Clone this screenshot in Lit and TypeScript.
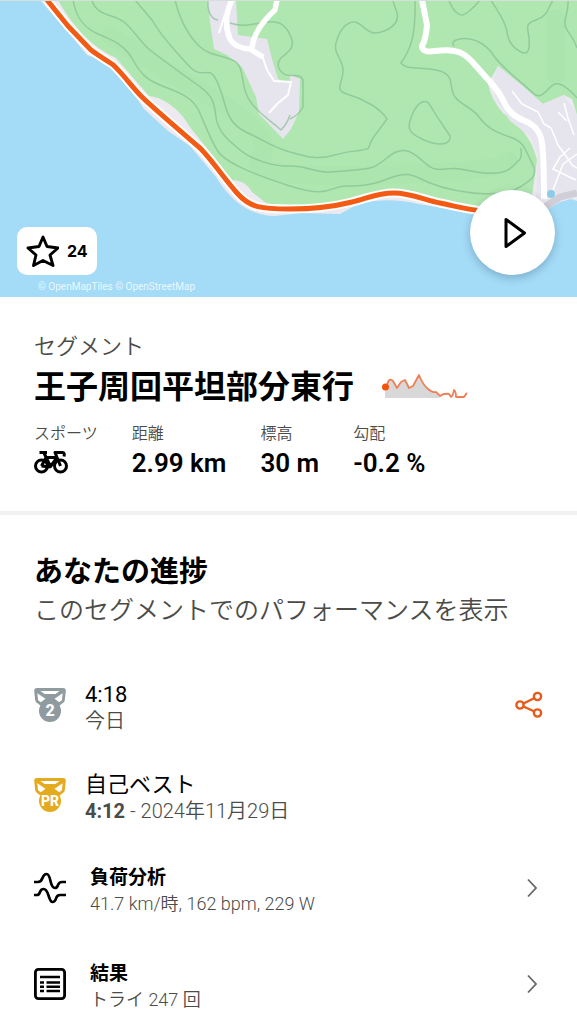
import { LitElement, html, css, svg } from "lit";
import { customElement } from "lit/decorators.js";

const CONTOURS = [
  "M73 0C76 18 84 28 98 34S124 44 133 60S148 80 160 85S192 95 199 111S210 138 217 150S250 173 290 186S330 186 345 186S370 186 390 178S415 177 430 183S465 193 487 194",
  "M92 0C96 16 114 14 124 22S140 42 150 50S185 76 199 86S214 102 216 117S228 140 240 150S275 167 290 166S315 173 330 172S360 170 370 168S387 156 396 152S412 151 425 163S445 166 460 169S500 178 512 167S521 158 521 148",
  "M135 0L152 20C162 38 175 50 188 65S208 67 214 76S222 95 226 108S236 128 250 134S272 147 290 152S317 160 335 155S352 152 362 150S366 150 373 138L387 119C380 107 360 98 347 94S342 85 343 72S333 55 336 43S346 22 354 22S366 34 376 33S400 25 397 13L393 1",
  "M175 0C180 20 188 35 199 46S227 55 236 62S240 90 252 104S270 120 281 130Q287 124 290 115",
  "M230 23C244 28 256 23 268 22S286 25 291 37S286 53 281 58S278 70 284 74S300 72 303 80V107Q299 115 290 119",
  "M208 0Q207 18 218 20",
  "M415 0C416 38 410 50 401 63C407 71 424 66 440 71S448 88 455 97S472 107 479 117S495 132 510 137S525 150 532 163S531 180 520 187S498 193 487 194",
  "M422 102C414 106 407 124 410 130S430 144 440 144S451 138 450 136S437 117 433 110S427 100 422 102Z",
  "M449 0C453 12 459 15 462 15S474 8 480 0",
  "M491 0C498 12 506 22 507 32S513 48 521 52S530 48 529 38S524 24 536 20S548 8 553 0",
  "M454 46C449 39 463 38 470 39S487 45 494 56S524 84 533 93S548 86 555 84S570 90 577 98",
  "M568 0C569 14 562 20 566 28S574 38 577 48",
];

const ROUTE =
  "M47 0L68 26L90 49Q93 52 112 64C118 68 133 88 142 97S178 129 200 148C211 159 224 178 237 193S262 209 290 209S336 206 352 202S378 193 394 193S425 200 440 203S468 210 485 211";

const trackMap = svg`
  <svg class="map-art" viewBox="0 0 577 297" preserveAspectRatio="xMidYMid slice" aria-hidden="true">
    <rect width="577" height="297" fill="#a4dbf6" />
    <path fill="#ece9f0" d="M40 0L68 32L87 55L98 59L114 70L130 88L144 109L168 131L190 146L216 177Q240 216 275 216L300 213L340 214L360 203Q390 197 418 204L450 209L485 213L548 209L560 202L571 199L577 201V0Z" />
    <path fill="#b0e7b0" d="M58 0C70 22 89 46 116 58L149 96C166 97 184 115 189 126L214 157L232 180Q245 180 252 192L266 203L285 206Q326 205 350 198T394 190T440 199L490 208L532 196L537 160C532 138 520 126 503 113Q491 99 488 84L498 66L520 84L543 104L564 95L572 99L577 115V0Z" />
    <g fill="none" stroke="#a5e3a9" stroke-width="18" stroke-linecap="round" opacity=".38">
      <path d="M110 36Q150 61 214 99T260 158T377 175T508 160" />
      <path d="M556 18V75" />
    </g>
    <path fill="#e6e4ed" d="M207 0H236L238 35L267 39L272 59L278 79L290 83V75L300 79L299 112L291 129L283 139L259 114L256 97L242 67L227 55L214 49Z" />
    <path fill="#e6e4ed" d="M498 66L520 84L543 104L564 95L577 115V189L536 200L538 155L531 137L510 121L495 98L494 78Z" />
    <g fill="none" stroke="#83bd91" stroke-width="1.5" opacity=".65">
      ${CONTOURS.map((d) => svg`<path d=${d} />`)}
    </g>
    <g fill="none" stroke="#fff" stroke-linejoin="round">
      <path stroke-width="5.5" d="M232 0Q222 20 230 39Q235 48 250 49L263 57M277 0L275 10Q254 29 252 48" />
      <path stroke-width="2" d="M262 55L267 70L274 81L291 82L288 95L278 103L269 113M225 14L219 33" />
      <path stroke-width="6" d="M422 0L427 25Q426 39 422 46Q422 53 435 51C458 48 465 53 476 66L492 84Q500 93 505 104T525 121T542 143T544 199" />
      <path stroke-width="1.5" d="M512 91L522 104L538 112L544 124L551 128L558 145L566 156L572 165L577 168M564 103L568 118L574 135M577 154L563 164L553 190M570 148L560 157L553 169L576 180M558 112L567 121" />
    </g>
    <path fill="none" stroke="#d0ced6" stroke-width="7" d="M540 210L560 197L577 193" />
    <circle cx="551" cy="194" r="4" fill="#8dcce8" />
    <path d=${ROUTE} fill="none" stroke="#fff" stroke-width="9" stroke-linejoin="round" />
    <path d=${ROUTE} fill="none" stroke="#f35b14" stroke-width="5" stroke-linejoin="round" />
    <path d="M0 .5H577" stroke="#d5dfdc" />
  </svg>`;

const medal = (place: string, kind: string, size: number) => html`
  <svg class="icon ${kind}" viewBox="0 0 32 36" aria-hidden="true">
    <path fill="currentColor" d="M3 1H29Q32 1 31.800 4L30.800 13Q30.500 14.500 29.500 15.500L25 19H7L2.500 15.500Q1.500 14.500 1.200 13L.2 4Q0 1 3 1Z" />
    <circle cx="16" cy="24" r="11" fill="currentColor" />
    <g fill="#fff">
      <path d="M6.500 4H25.500L21.500 7H10.500Z" />
      <path d="M3.300 6.200L11.500 11.700L6.800 15.200L4.100 13.200Z" />
      <path d="M28.700 6.200L20.500 11.700L25.200 15.200L27.900 13.200Z" />
      <text x="16" y="29" text-anchor="middle" font-size=${size} font-weight="800">${place}</text>
    </g>
  </svg>`;

const chevron = html`
  <svg class="chevron" viewBox="0 0 12 20" aria-hidden="true">
    <path d="M2 1.500L10 10L2 18.500" fill="none" stroke="#666562" stroke-width="1.800" />
  </svg>`;

@customElement("app-root")
export class AppRoot extends LitElement {
  static styles = css`
    :host {
      display: block;
      min-height: 100vh;
      background: #fff;
      color: #000;
      font-family: Roboto, "Noto Sans CJK JP", sans-serif;
    }
    * { box-sizing: border-box; }
    h1, h2, p, dl, dt, dd, ul { margin: 0; padding: 0; }
    button { font: inherit; color: inherit; border: 0; padding: 0; cursor: pointer; }
    svg { display: block; flex: none; }
    .map { position: relative; height: 297px; overflow: hidden; }
    .map-art { width: 100%; height: 100%; }
    .star {
      position: absolute; left: 17px; bottom: 22px;
      display: flex; align-items: center; gap: 8px;
      height: 48px; padding: 0 9px; border-radius: 10px;
      background: #fff;
      font: 700 16px/24px Inter, sans-serif;
    }
    .star svg { width: 33px; height: 33px; }
    .play {
      position: absolute; right: 22px; bottom: 22px;
      display: grid; place-items: center;
      width: 85px; height: 85px; border-radius: 50%;
      background: #fff;
      box-shadow: 0 3px 8px rgb(0 40 70 / 25%);
    }
    .play svg { width: 24px; height: 32px; margin-left: 4px; }
    .credit {
      position: absolute; left: 38px; bottom: 2px;
      color: #e9f8ff; font: 400 10px/16px Roboto, sans-serif;
    }
    .segment { padding: 34px 34px 31px; border-bottom: 4px solid #f1f1f3; }
    .kicker { color: #4b4b48; font-size: 22px; font-weight: 350; line-height: 32px; }
    .title-line { display: flex; align-items: center; gap: 28px; }
    h1 { font-size: 32px; line-height: 48px; font-weight: 700; }
    .profile { width: 86px; height: 26px; }
    .stats { display: flex; gap: 34px; margin-top: 11px; }
    dt { color: #4b4b48; font-size: 16px; font-weight: 350; line-height: 24px; }
    dd { font-size: 26px; font-weight: 600; line-height: 34px; white-space: nowrap; }
    .bike { width: 34px; height: 24px; margin-top: 4px; }
    .progress { padding: 37px 34px 0; }
    h2 { font-size: 29px; line-height: 40px; font-weight: 700; }
    .lead { color: #4b4b48; font-size: 25px; font-weight: 350; line-height: 38px; }
    .efforts { list-style: none; margin-top: 30px; }
    .effort { display: flex; align-items: center; gap: 19px; height: 90px; width: 100%; }
    .link { gap: 24px; height: 96px; color: inherit; text-decoration: none; }
    .icon { width: 32px; height: 36px; }
    .silver { color: #8f9b9f; }
    .gold { color: #e5ab20; }
    .text { flex: 1; min-width: 0; padding-top: 6px; }
    .main { font-size: 22px; font-weight: 400; line-height: 26px; }
    .sub { color: #4b4b48; font-size: 20px; font-weight: 350; line-height: 26px; }
    .sub b { font-weight: 700; }
    .link .main { font-size: 19px; font-weight: 700; }
    .link .sub { font-size: 18px; }
    .share { background: none; }
    .share svg { width: 28px; height: 28px; }
    .chevron { width: 12px; height: 20px; margin-right: 5px; }
  `;

  render() {
    return html`
      <header class="map">
        ${trackMap}
        <button class="star" aria-label="24">
          <svg viewBox="0 0 33 33" aria-hidden="true">
            <path d="M17 2L21 11.500L32 13L24 20L27 30.500L17 25.500L7.500 30.500L10 20L2 13L13 11.500Z" fill="none" stroke="#000" stroke-width="2.900" stroke-linejoin="round" />
          </svg>
          <span>24</span>
        </button>
        <button class="play" aria-label="再生">
          <svg viewBox="0 0 24 32" aria-hidden="true">
            <path d="M3 2.500V29.500L21.500 16Z" fill="none" stroke="#000" stroke-width="3" stroke-linejoin="round" />
          </svg>
        </button>
        <p class="credit">© OpenMapTiles © OpenStreetMap</p>
      </header>

      <section class="segment">
        <p class="kicker">セグメント</p>
        <div class="title-line">
          <h1>王子周回平坦部分東行</h1>
          <svg class="profile" viewBox="0 0 86 26" aria-hidden="true">
            <path fill="#d8d8d8" d="M3 13L7 6L11 6L15 13L23 6L28 14L31 12L37 1L41 10L47 16L54 19L58 24H3Z" />
            <path fill="none" stroke="#ee8058" stroke-width="1.800" stroke-linejoin="round" d="M3 13Q5 12 6 8Q8 4 11 7L15 14L19 8L23 6L27 14L31 12L37 1Q41 11 46 15T54 18L58 22Q62 19 67 20L69 23Q71 22 72 16Q74 17 74 23Q79 23 82 23Q84 20 85 19" />
            <circle cx="3.500" cy="13" r="3.500" fill="#f45309" />
          </svg>
        </div>
        <dl class="stats">
          <div>
            <dt>スポーツ</dt>
            <dd>
              <svg class="bike" viewBox="0 0 34 24" role="img" aria-label="自転車">
                <g fill="none" stroke="#000" stroke-width="3" stroke-linejoin="round">
                  <circle cx="7.500" cy="16" r="6" />
                  <circle cx="26.500" cy="16" r="6" />
                  <path d="M5.500 2.500H13M7.500 16L12 7.500H23L16.500 16.500L10 3M7.500 16L16.500 17M26.500 16L21 2.500H28.500Q31 2.500 30 6.500" />
                </g>
              </svg>
            </dd>
          </div>
          <div><dt>距離</dt><dd>2.99 km</dd></div>
          <div><dt>標高</dt><dd>30 m</dd></div>
          <div><dt>勾配</dt><dd>-0.2 %</dd></div>
        </dl>
      </section>

      <section class="progress">
        <h2>あなたの進捗</h2>
        <p class="lead">このセグメントでのパフォーマンスを表示</p>
        <ul class="efforts">
          <li class="effort">
            ${medal("2", "silver", 16)}
            <div class="text"><p class="main">4:18</p><p class="sub">今日</p></div>
            <button class="share" aria-label="共有">
              <svg viewBox="0 0 28 28" aria-hidden="true">
                <g fill="none" stroke="#e65a1c" stroke-width="2.400">
                  <circle cx="5" cy="14" r="3.600" />
                  <circle cx="22.500" cy="5.500" r="3.600" />
                  <circle cx="22.500" cy="22" r="3.600" />
                  <path d="M8.500 12.500L19.500 7M8.500 15.500L19.500 20.500" />
                </g>
              </svg>
            </button>
          </li>
          <li class="effort">
            ${medal("PR", "gold", 14)}
            <div class="text"><p class="main">自己ベスト</p><p class="sub"><b>4:12</b> - 2024年11月29日</p></div>
          </li>
          <li>
            <a class="effort link" href="#analysis">
              <svg class="icon" viewBox="0 0 32 36" aria-hidden="true">
                <path fill="none" stroke="#000" stroke-width="2.700" stroke-linejoin="round" d="M0 12H4Q7 12 8.500 8T12.500 4Q15 4 16.500 11T21 18Q23 18 24 15T28 12H32M0 25H3Q5 25 6 22T9.500 19Q12.500 19 14.500 25.500T18.500 32Q21 32 22 28.500T26 25H32" />
              </svg>
              <div class="text"><p class="main">負荷分析</p><p class="sub">41.7 km/時, 162 bpm, 229 W</p></div>
              ${chevron}
            </a>
          </li>
          <li>
            <a class="effort link" href="#results">
              <svg class="icon" viewBox="0 0 32 36" aria-hidden="true">
                <rect x="1.400" y="3.400" width="29.200" height="29.200" rx="3" fill="none" stroke="#000" stroke-width="2.800" />
                <path stroke="#000" stroke-width="2.600" d="M6 11H26M6 16.500H10M12.500 16.500H26M6 20.800H10M12.500 20.800H26M6 25H10M12.500 25H26" />
              </svg>
              <div class="text"><p class="main">結果</p><p class="sub">トライ 247 回</p></div>
              ${chevron}
            </a>
          </li>
        </ul>
      </section>
    `;
  }
}
